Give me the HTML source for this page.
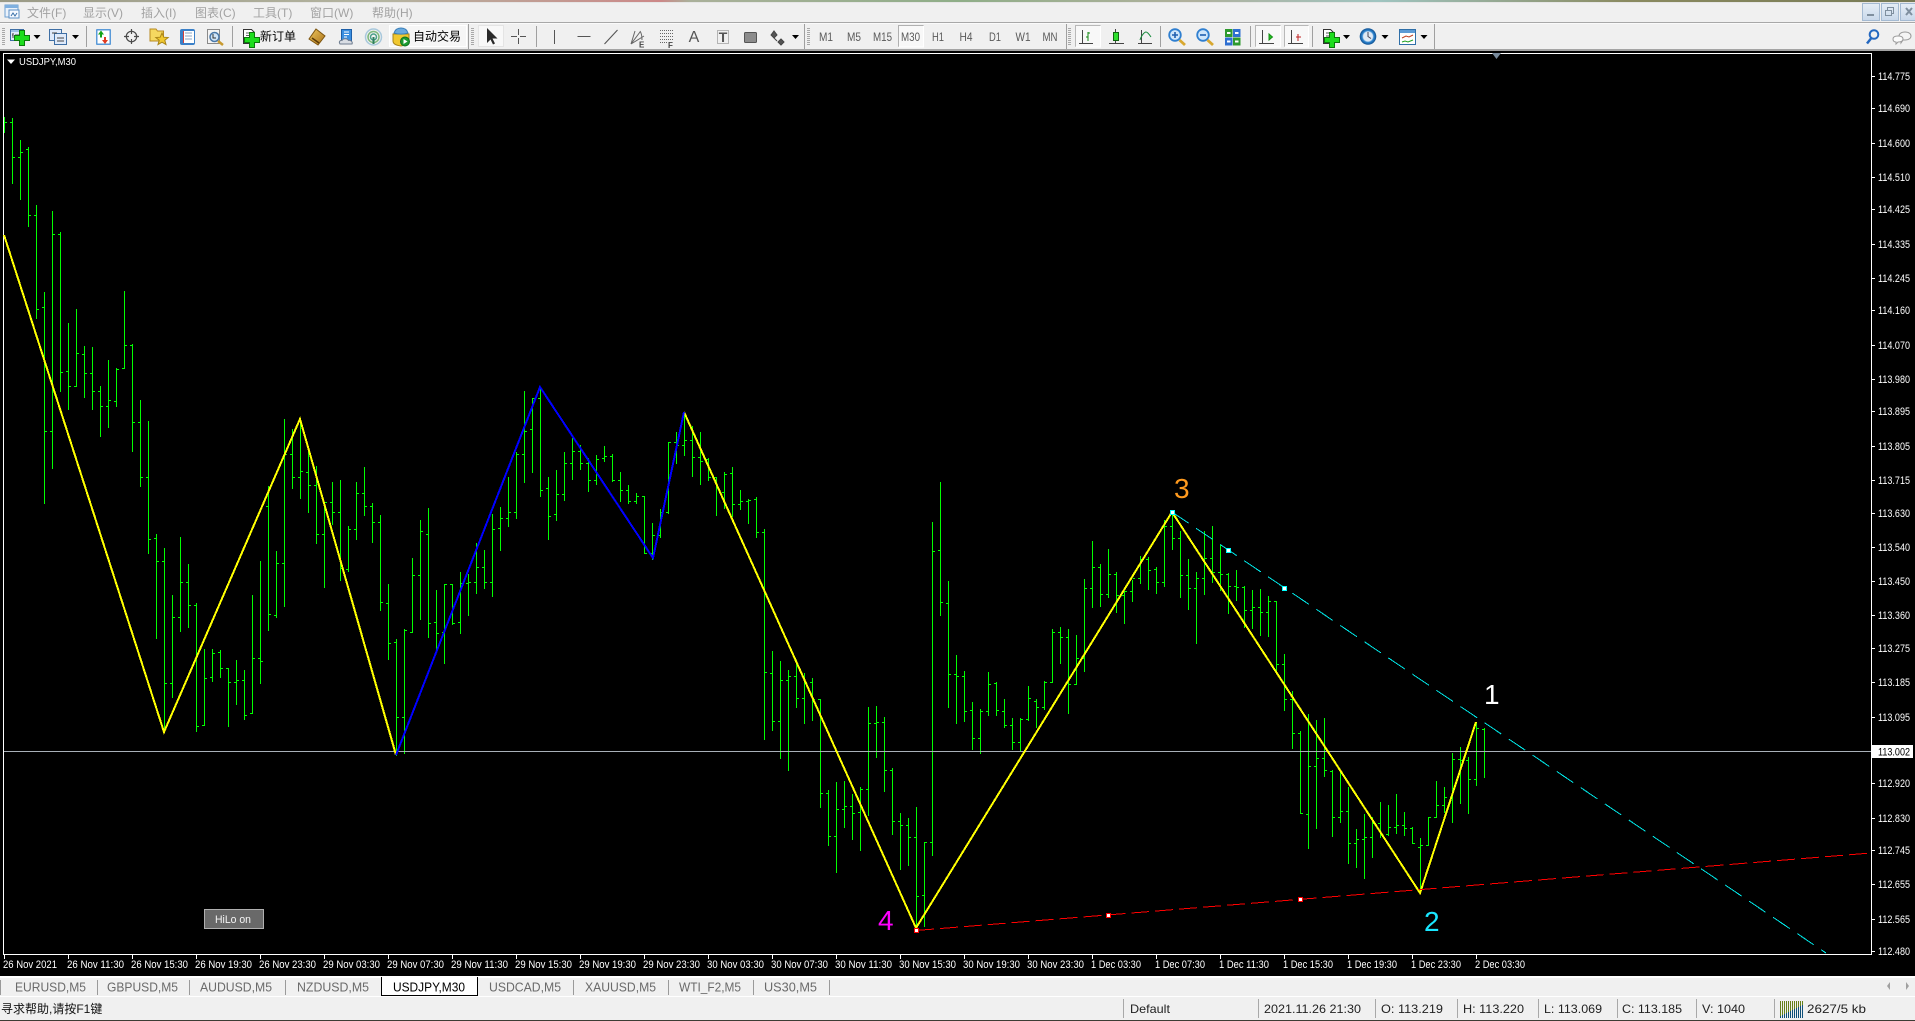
<!DOCTYPE html>
<html><head><meta charset="utf-8"><title>USDJPY,M30</title>
<style>
html,body{margin:0;padding:0;background:#000;width:1915px;height:1021px;overflow:hidden}
svg{display:block;position:absolute;left:0;top:0}
text{font-family:"Liberation Sans","Noto Sans CJK SC",sans-serif}
.m{font-size:12px;fill:#a2a2a2}
.tb{font-size:12px;fill:#000}
.tf{font-size:12px;fill:#5a5a5a;text-anchor:middle}
.ax{font-size:11px;fill:#fff}
.tm{font-size:11px;fill:#fff}
.tab{font-size:13px;fill:#6a6a6a}
.st{font-size:12px;fill:#222}
.num{font-size:28px}
</style></head><body>
<svg width="1915" height="1021" viewBox="0 0 1915 1021" xmlns="http://www.w3.org/2000/svg">
<defs>
<linearGradient id="wall" x1="0" x2="1" y1="0" y2="0">
<stop offset="0" stop-color="#9a9a86"/><stop offset=".2" stop-color="#b4b4a0"/><stop offset=".345" stop-color="#c88"/><stop offset=".36" stop-color="#aab09a"/><stop offset=".5" stop-color="#8fae88"/><stop offset=".62" stop-color="#b0b09c"/><stop offset=".72" stop-color="#9fc4c0"/><stop offset=".85" stop-color="#8a8a60"/><stop offset="1" stop-color="#777a55"/>
</linearGradient>
<linearGradient id="wb" x1="0" x2="0" y1="0" y2="1"><stop offset="0" stop-color="#e6eef7"/><stop offset="1" stop-color="#c8d8ea"/></linearGradient>
<linearGradient id="gold" x1="0" x2="1" y1="0" y2="1"><stop offset="0" stop-color="#f0c860"/><stop offset="1" stop-color="#a87018"/></linearGradient>
<radialGradient id="clk"><stop offset=".55" stop-color="#dfeaf5"/><stop offset=".7" stop-color="#2f86d0"/><stop offset="1" stop-color="#0e4f90"/></radialGradient>
<path id="plus" d="M-2.5-7.5h5v5h5v5h-5v5h-5v-5h-5v-5h5z" fill="#1edc1e" stroke="#0a7a0a"/>
<path id="dd" d="M-3.5-2h7l-3.5 4z" fill="#000"/>
<pattern id="grip" width="4" height="2" patternUnits="userSpaceOnUse"><rect width="4" height="1" fill="#a8a8a8"/></pattern>
</defs>

<rect width="1915" height="1021" fill="#f0f0f0"/>
<rect width="1915" height="2" fill="url(#wall)"/>
<rect y="2" width="1915" height="1" fill="#e6e6e6"/>

<!-- menu -->
<g>
<rect x="5" y="5" width="13" height="12" fill="#eaf2fb" stroke="#6d9fd0"/><rect x="5" y="5" width="13" height="3" fill="#7fb0e0"/>
<rect x="9" y="10" width="10" height="8" fill="#f5f9ff" stroke="#5b8fc4"/><path d="M11 16l2-3 2 3 2-3" fill="none" stroke="#3a70a8"/>
<text class="m" x="27" y="17">文件(F)</text>
<text class="m" x="83" y="17">显示(V)</text>
<text class="m" x="141" y="17">插入(I)</text>
<text class="m" x="195" y="17">图表(C)</text>
<text class="m" x="253" y="17">工具(T)</text>
<text class="m" x="310" y="17">窗口(W)</text>
<text class="m" x="372" y="17">帮助(H)</text>
</g>
<!-- window buttons -->
<g>
<rect x="1862.5" y="3.5" width="17" height="17" fill="url(#wb)" stroke="#a4bad2"/><rect x="1867" y="14" width="7" height="2" fill="#7f8f9f"/>
<rect x="1881.5" y="3.5" width="17" height="17" fill="url(#wb)" stroke="#a4bad2"/><path d="M1887.5 10.5v-3h6v6h-2M1885.5 10.5h6v5h-6z" fill="none" stroke="#7f8f9f"/>
<rect x="1900.5" y="3.5" width="17" height="17" fill="url(#wb)" stroke="#a4bad2"/><path d="M1906 8l6 7M1912 8l-6 7" stroke="#7f8f9f" stroke-width="2"/>
</g>
<rect y="22" width="1915" height="1" fill="#a8a8a8"/>
<rect y="23" width="1915" height="1" fill="#fafafa"/>

<!-- toolbar separators & grips -->
<g fill="#a0a0a0">
<rect x="86" y="26" width="1" height="21"/><rect x="232" y="26" width="1" height="21"/><rect x="468" y="24" width="1" height="25"/><rect x="536" y="26" width="1" height="21"/><rect x="804" y="24" width="1" height="25"/><rect x="1066" y="24" width="1" height="25"/><rect x="1160" y="26" width="1" height="21"/><rect x="1250" y="26" width="1" height="21"/><rect x="1312" y="26" width="1" height="21"/><rect x="1434" y="24" width="1" height="25"/>
</g>
<rect x="2" y="27" width="3" height="19" fill="url(#grip)"/>
<rect x="471" y="27" width="3" height="19" fill="url(#grip)"/>
<rect x="807" y="27" width="3" height="19" fill="url(#grip)"/>
<rect x="1068" y="27" width="3" height="19" fill="url(#grip)"/>

<!-- pressed buttons -->
<g fill="#f8f8f8">
<path d="M389.5 25.5h77v21h-77z" stroke="#fff" fill="#f6f6f6"/>
<path d="M478.5 25.5h25v21h-25z" stroke="#e4e4e4"/>
<path d="M899 26h25v21h-25z"/><path d="M898.5 47v-21.5h25" fill="none" stroke="#b0b0b0"/><path d="M923.5 26v21h-25" fill="none" stroke="#fff"/>
<path d="M1076 26h24v21h-24z"/><path d="M1075.5 47v-21.5h25" fill="none" stroke="#b8b8b8"/><path d="M1100.5 26v21h-25" fill="none" stroke="#fff"/>
<path d="M1255 26h25v21h-25z"/><path d="M1255.5 47v-21.5h25" fill="none" stroke="#b8b8b8"/><path d="M1280.5 26v21h-25" fill="none" stroke="#fff"/>
<path d="M1284 26h24v21h-24z"/><path d="M1284.5 47v-21.5h24" fill="none" stroke="#b8b8b8"/><path d="M1308.5 26v21h-24" fill="none" stroke="#fff"/>
</g>

<!-- new chart -->
<g><rect x="10.5" y="29.5" width="13" height="11" fill="#dfeafa" stroke="#3f6fa5"/><rect x="11" y="30" width="12" height="2" fill="#9cbfe6"/><path d="M13 33v5M15 35h5M13 35h-1" stroke="#444"/><use href="#plus" x="22" y="38"/><use href="#dd" x="37" y="37"/></g>
<!-- profiles -->
<g fill="#dfeafa" stroke="#3f6fa5"><rect x="49.5" y="29.5" width="12" height="11"/><rect x="54.5" y="33.5" width="12" height="11"/><path d="M52 33h5M57 38h7M57 41h7" stroke="#444" fill="none"/><use href="#dd" x="75.5" y="37" stroke="none"/></g>
<!-- market watch -->
<g><rect x="96" y="29" width="15" height="16" rx="1" fill="#5a9ad8"/><rect x="97.500" y="30.500" width="12" height="13" fill="#fff"/><path d="M101 30.500l-3 4h2v3h2v-3h2z" fill="#16a316"/><path d="M105 44l3-4h-2v-3h-2v3h-2z" fill="#e03a20"/></g>
<!-- crosshair -->
<g fill="none" stroke="#4a4a4a" stroke-width="1.2"><circle cx="131.5" cy="36.5" r="5.2"/><path d="M131.5 29v5M131.5 39v5M124 36.5h5M134 36.5h5"/></g>
<!-- navigator -->
<g><path d="M150 29h6l1.5 2h6v10h-13.500z" fill="#f5d860" stroke="#b88a20"/><path d="M162 33l1.8 4.200 4.400.3-3.400 2.800 1.200 4.300-4-2.400-4 2.400 1.200-4.300-3.400-2.800 4.400-.3z" fill="#f0c830" stroke="#a88418"/></g>
<!-- terminal -->
<g><rect x="180" y="29" width="15" height="16" rx="2" fill="#3a80c8"/><rect x="183" y="31" width="11" height="12" fill="#fff"/><path d="M185 33h7M185 36h7M185 39h7" stroke="#8aa4c4"/><rect x="183" y="31" width="1" height="12" fill="#d04040"/></g>
<!-- tester -->
<g><rect x="207.5" y="29.5" width="12" height="14" fill="#f4f4f4" stroke="#8a8a8a"/><circle cx="214.5" cy="37" r="4.5" fill="#cfe4f7" stroke="#4a78a8" stroke-width="1.5"/><path d="M218 41l5 4" stroke="#c89a30" stroke-width="2.5"/><path d="M213 34v4h3" stroke="#333" fill="none"/></g>
<!-- new order -->
<g><path d="M243.5 29.5h8l3 3v11h-11z" fill="#fff" stroke="#333"/><path d="M246 33h5M246 35.500h6M246 38h4" stroke="#666"/><use href="#plus" x="252" y="40"/><text class="tb" x="260" y="40.500">新订单</text></g>
<!-- metaeditor -->
<g><path d="M316 29l9 7-7 9-9-6z" fill="url(#gold)" stroke="#7d5510"/><path d="M312 38l7 5" stroke="#5a3a08" stroke-width="1.5"/></g>
<!-- cloud doc -->
<g><path d="M341.5 29.5h10v11h-10z" fill="#3b8fe0" stroke="#1d5fa8"/><path d="M344 32h5M344 34.500h5M344 37h3" stroke="#fff"/><path d="M340 44c-1.500-2 0-4 2-3.500 1-2 5-2.500 6.500 0 2.500-.5 4.500 1.500 3.500 3.500z" fill="#d9dde4" stroke="#6f7d90"/></g>
<!-- signal -->
<g fill="none"><circle cx="373.5" cy="37" r="8" stroke="#a8c8dc" stroke-width="1.5"/><circle cx="373.5" cy="37" r="5.5" stroke="#7db87d" stroke-width="1.5"/><circle cx="373.5" cy="37" r="3" stroke="#4a9f8a" stroke-width="1.5"/><rect x="372.500" y="37" width="2" height="7" fill="#2f7f60"/></g>
<!-- autotrading -->
<g><path d="M393 34h16v7c0 3-4 4.500-8 5-4-.5-8-2-8-5z" fill="#f0c830" stroke="#a88418"/><path d="M394 33c1-3 3-5 7-5s6 2 7 5c-4 1.500-10 1.500-14 0z" fill="#6aaade" stroke="#3a7eb8"/><circle cx="405" cy="41.500" r="4.500" fill="#1c9c30" stroke="#0f6f1f"/><path d="M403.500 39v5l4-2.500z" fill="#fff"/><text class="tb" x="413" y="40.500">自动交易</text></g>
<!-- cursor -->
<path d="M487 28v15l3.500-3.500 2.500 5 2-1-2.500-5h5z" fill="#2a2a2a"/>
<path d="M518.5 29v6M518.5 38v6M511 36.5h6M520 36.5h6" stroke="#555" fill="none"/>
<path d="M554.5 30v14" stroke="#555"/>
<path d="M577.5 36.5h13" stroke="#555"/>
<path d="M604.5 44l13-14" stroke="#555" stroke-width="1.1"/>
<!-- fib fan -->
<path d="M631 44l4-13M631 44l9-12M631 44l13-8M640 31c2 3 2 6 2 9" fill="none" stroke="#666"/>
<text x="639" y="47.500" style="font-size:8px;font-weight:bold;fill:#444">E</text>
<path d="M660 30.500h13M660 33.500h13M660 36.500h13M660 39.500h13M660 42.500h8" stroke="#666" stroke-dasharray="1 1"/>
<text x="668" y="48" style="font-size:8px;font-weight:bold;fill:#444">F</text>
<text x="694" y="42" style="font-size:16px;fill:#555;text-anchor:middle">A</text>
<rect x="717.5" y="30.5" width="11" height="13" fill="none" stroke="#777" stroke-dasharray="1 1"/><text x="723" y="42" style="font-size:14px;font-weight:bold;fill:#555;text-anchor:middle">T</text>
<rect x="744.5" y="32.5" width="12" height="10" rx="1" fill="#8c8c8c" stroke="#555"/>
<path d="M771 35l3-4 3 4-3 3zM778 42l3-3 3 3-3 3zM774 38l3 3" fill="#555" stroke="#444"/>
<use href="#dd" x="795.5" y="37"/>

<!-- timeframes -->
<text class="tf" x="826" y="41" textLength="14" lengthAdjust="spacingAndGlyphs">M1</text>
<text class="tf" x="854" y="41" textLength="14" lengthAdjust="spacingAndGlyphs">M5</text>
<text class="tf" x="882.5" y="41" textLength="19" lengthAdjust="spacingAndGlyphs">M15</text>
<text class="tf" x="910.5" y="41" textLength="19" lengthAdjust="spacingAndGlyphs">M30</text>
<text class="tf" x="938" y="41" textLength="12" lengthAdjust="spacingAndGlyphs">H1</text>
<text class="tf" x="966" y="41" textLength="13" lengthAdjust="spacingAndGlyphs">H4</text>
<text class="tf" x="995" y="41" textLength="12" lengthAdjust="spacingAndGlyphs">D1</text>
<text class="tf" x="1023" y="41" textLength="15" lengthAdjust="spacingAndGlyphs">W1</text>
<text class="tf" x="1050" y="41" textLength="15" lengthAdjust="spacingAndGlyphs">MN</text>

<!-- chart types -->
<g fill="none" stroke="#444"><path d="M1082.5 30v14M1079 43.5h14"/><path d="M1088 32v9M1086 37h2M1088 33h2" stroke="#118811"/><path d="M1115.5 29v15M1109 43.5h15"/><rect x="1113.5" y="32.5" width="5" height="8" fill="#2ee02e" stroke="#116611"/><path d="M1141.5 30v14M1138 43.5h14"/><path d="M1140 40c2-6 5-8 6-8s3 2 5 5" stroke="#158a3a"/></g>
<!-- zoom -->
<g><circle cx="1175" cy="35" r="5.8" fill="#cfe6fb" stroke="#2f7fd0" stroke-width="1.8"/><path d="M1172 35h6M1175 32v6" stroke="#1f5fb0" stroke-width="1.6"/><path d="M1179.5 40l5.5 5" stroke="#d8a830" stroke-width="2.8"/><circle cx="1203" cy="35" r="5.8" fill="#cfe6fb" stroke="#2f7fd0" stroke-width="1.8"/><path d="M1200 35h6" stroke="#1f5fb0" stroke-width="1.6"/><path d="M1207.5 40l5.5 5" stroke="#d8a830" stroke-width="2.8"/></g>
<!-- tile -->
<g><rect x="1225" y="29" width="7.5" height="8" fill="#2e9a2e"/><rect x="1233" y="29" width="7.5" height="8" fill="#2f6fd0"/><rect x="1225" y="37.5" width="7.5" height="8" fill="#2f6fd0"/><rect x="1233" y="37.5" width="7.5" height="8" fill="#2e9a2e"/><path d="M1227 33h3.500M1235 33h3.500M1227 41.500h3.500M1235 41.500h3.500" stroke="#fff" stroke-width="2"/></g>
<!-- autoscroll / shift -->
<g fill="none" stroke="#444"><path d="M1262.5 30v14M1259 43.5h15"/><path d="M1269 34v6l3.500-3z" fill="#24c024" stroke="#149014"/><path d="M1291.5 30v14M1288 43.5h15"/><path d="M1298 34v7M1296 37h5" stroke="#c02020"/></g>
<!-- template -->
<g><path d="M1323.5 29.5h7l3 3v11h-10z" fill="#fff" stroke="#333"/><path d="M1326 33h4M1326 36h4" stroke="#555"/><use href="#plus" x="1332" y="40"/><use href="#dd" x="1346.5" y="37"/></g>
<!-- clock -->
<g><circle cx="1368" cy="36.5" r="8.3" fill="url(#clk)"/><path d="M1368 32v4.500l3 2" stroke="#445" fill="none"/><use href="#dd" x="1385" y="37"/></g>
<!-- window chart -->
<g><rect x="1399.5" y="29.5" width="16" height="15" fill="#fff" stroke="#2f6fa8"/><rect x="1400" y="30" width="15" height="3" fill="#5d9bd5"/><path d="M1402 38l4-2 3 1 4-2" fill="none" stroke="#c04020"/><path d="M1402 42l3-1 3 1 5-2" fill="none" stroke="#20a020"/><use href="#dd" x="1424" y="37"/></g>
<!-- search / chat -->
<g fill="none"><circle cx="1874" cy="34.5" r="4.300" stroke="#2468c0" stroke-width="2"/><path d="M1871 38.500l-4 5" stroke="#2468c0" stroke-width="2.5"/><path d="M1899 36c0-2 2-4 6-4s6 2 6 4-2 4-6 4h-2l-2 3v-3c-1-.5-2-2-2-4z" fill="#f4f4f4" stroke="#9a9a9a"/><path d="M1893 39c0-2 2-3 5-3s5 1 5 3-2 3-5 3l-2 2v-2c-2 0-3-1-3-3z" fill="#fbfbfb" stroke="#9a9a9a"/></g>

<rect y="49" width="1915" height="2" fill="#a4a4a4"/>

<!-- chart area -->
<rect y="51" width="1915" height="925" fill="#000"/>
<g shape-rendering="crispEdges">
<g fill="#fff"><rect x="3" y="53" width="1869" height="1"/><rect x="3" y="53" width="1" height="902"/><rect x="1871" y="53" width="1" height="902"/><rect x="3" y="954" width="1869" height="1"/></g>
<g fill="none" stroke="#00ff00" stroke-width="1">
<path transform="translate(.5 0)" d="M4 117V133M12 118V184M20 140V200M28 147V227M36 205V319M44 292V504M52 211V469M60 232V392M68 323V410M76 309V387M84 346V398M92 347V410M100 386V437M108 360V428M116 368V407M124 291V369M132 344V452M140 400V487M148 421V554M156 534V639M164 548V732M172 595V698M180 537V632M188 564V628M196 603V732M204 649V726M212 649V682M220 650V678M228 668V727M236 660V705M244 670V720M252 595V714M260 561V684M268 486V631M276 551V618M284 419V607M292 429V489M300 420V499M308 450V513M316 466V544M324 506V588M332 482V525M340 480V581M348 526V572M356 482V540M364 467V516M372 503V543M380 515V611M388 584V660M396 639V756M404 629V754M412 558V633M420 520V620M428 508V638M436 590V651M444 584V664M452 584V625M460 572V634M468 574V616M476 543V594M484 550V589M492 514V597M500 507V551M508 477V527M516 452V519M524 391V483M532 398V473M540 388V497M548 477V540M556 470V521M564 452V501M572 438V480M580 445V470M588 458V492M596 455V485M604 446V462M612 454V482M620 472V502M628 485V504M636 493V504M644 496V554M652 523V560M660 509V538M668 442V514M676 432V464M684 413V456M692 426V477M700 432V485M708 458V481M716 477V516M724 472V509M732 467V517M740 490V510M748 499V524M756 497V538M764 529V740M772 651V731M780 661V759M788 670V771M796 660V708M804 673V724M812 678V721M820 699V808M828 790V846M836 782V873M844 781V828M852 794V840M860 787V851M868 707V816M876 706V758M884 717V792M892 768V835M900 813V870M908 818V866M916 807V929M924 842V927M932 522V856M940 482V616M948 581V708M956 655V724M964 671V722M972 702V750M980 709V754M988 672V716M996 682V716M1004 699V728M1012 718V750M1020 718V752M1028 686V721M1036 699V728M1044 681V710M1052 629V683M1060 627V664M1068 629V714M1076 635V685M1084 579V672M1092 541V608M1100 564V607M1108 549V598M1116 572V613M1124 591V624M1132 580V602M1140 556V584M1148 557V590M1156 567V594M1164 520V587M1172 513V550M1180 531V598M1188 559V610M1196 572V644M1204 531V595M1212 526V583M1220 545V591M1228 573V614M1236 570V601M1244 586V628M1252 590V629M1260 589V636M1268 596V637M1276 601V674M1284 654V711M1292 691V749M1300 731V814M1308 714V849M1316 720V829M1324 718V777M1332 770V837M1340 772V823M1348 787V864M1356 829V868M1364 814V879M1372 817V858M1380 802V838M1388 805V836M1396 794V834M1404 812V836M1412 827V844M1420 838V893M1428 817V846M1436 781V818M1444 787V813M1452 753V823M1460 747V804M1468 757V814M1476 722V786M1484 728V778"/>
<path transform="translate(0 .5)" d="M5 122h2M10 122h2M13 157h2M18 157h2M21 152h2M26 149h2M29 215h2M34 215h2M37 309h2M42 307h2M45 431h2M50 431h2M53 234h2M58 234h2M61 372h2M66 371h2M69 386h2M74 386h2M77 353h2M82 354h2M85 373h2M90 373h2M93 391h2M98 391h2M101 406h2M106 406h2M109 400h2M114 401h2M117 369h2M122 368h2M125 345h2M130 345h2M133 422h2M138 422h2M141 477h2M146 477h2M149 539h2M154 538h2M157 561h2M162 561h2M165 683h2M170 683h2M173 617h2M178 617h2M181 582h2M186 582h2M189 605h2M194 605h2M197 726h2M202 725h2M205 678h2M210 677h2M213 653h2M218 652h2M221 668h2M226 668h2M229 682h2M234 682h2M237 680h2M242 680h2M245 715h2M250 713h2M253 658h2M258 658h2M261 661h2M266 506h2M269 614h2M274 615h2M277 563h2M282 563h2M285 454h2M290 454h2M293 477h2M298 477h2M301 471h2M306 472h2M309 485h2M314 485h2M317 534h2M322 534h2M325 502h2M330 502h2M333 512h2M338 512h2M341 568h2M346 569h2M349 529h2M354 529h2M357 493h2M362 493h2M365 506h2M370 506h2M373 522h2M378 522h2M381 602h2M386 603h2M389 643h2M394 642h2M397 717h2M402 717h2M405 630h2M410 632h2M413 575h2M418 575h2M421 531h2M426 534h2M429 623h2M434 622h2M437 633h2M442 632h2M445 584h2M450 584h2M453 623h2M458 622h2M461 583h2M466 583h2M469 582h2M474 582h2M477 567h2M482 567h2M485 582h2M490 582h2M493 529h2M498 528h2M501 518h2M506 518h2M509 512h2M514 512h2M517 454h2M522 454h2M525 431h2M530 429h2M533 398h2M538 398h2M541 490h2M546 488h2M549 516h2M554 514h2M557 494h2M562 494h2M565 463h2M570 463h2M573 451h2M578 451h2M581 463h2M586 463h2M589 480h2M594 480h2M597 459h2M602 458h2M605 456h2M610 456h2M613 480h2M618 480h2M621 490h2M626 490h2M629 501h2M634 501h2M637 496h2M642 496h2M645 553h2M650 553h2M653 535h2M658 535h2M661 512h2M666 512h2M669 442h2M674 442h2M677 445h2M682 445h2M685 440h2M690 440h2M693 457h2M698 457h2M701 461h2M706 459h2M709 477h2M714 477h2M717 487h2M722 492h2M725 474h2M730 473h2M733 504h2M738 504h2M741 501h2M746 501h2M749 500h2M754 499h2M757 532h2M762 532h2M765 672h2M770 673h2M773 721h2M778 721h2M781 680h2M786 680h2M789 676h2M794 676h2M797 698h2M802 698h2M805 682h2M810 682h2M813 699h2M818 699h2M821 793h2M826 793h2M829 836h2M834 836h2M837 809h2M842 809h2M845 806h2M850 806h2M853 813h2M858 812h2M861 789h2M866 789h2M869 723h2M874 723h2M877 722h2M882 722h2M885 770h2M890 770h2M893 821h2M898 821h2M901 825h2M906 825h2M909 837h2M914 837h2M917 896h2M922 895h2M925 842h2M930 842h2M933 551h2M938 550h2M941 602h2M946 603h2M949 674h2M954 674h2M957 676h2M962 676h2M965 711h2M970 710h2M973 738h2M978 738h2M981 711h2M986 711h2M989 684h2M994 683h2M997 710h2M1002 711h2M1005 725h2M1010 725h2M1013 742h2M1018 742h2M1021 719h2M1026 719h2M1029 698h2M1034 701h2M1037 707h2M1042 707h2M1045 682h2M1050 682h2M1053 632h2M1058 632h2M1061 637h2M1066 637h2M1069 684h2M1074 684h2M1077 658h2M1082 658h2M1085 588h2M1090 588h2M1093 567h2M1098 567h2M1101 594h2M1106 594h2M1109 574h2M1114 574h2M1117 595h2M1122 595h2M1125 591h2M1130 591h2M1133 578h2M1138 578h2M1141 559h2M1146 559h2M1149 570h2M1154 569h2M1157 582h2M1162 582h2M1165 526h2M1170 526h2M1173 538h2M1178 538h2M1181 575h2M1186 575h2M1189 588h2M1194 588h2M1197 578h2M1202 578h2M1205 558h2M1210 558h2M1213 572h2M1218 572h2M1221 574h2M1226 574h2M1229 586h2M1234 586h2M1237 587h2M1242 587h2M1245 610h2M1250 610h2M1253 607h2M1258 607h2M1261 612h2M1266 612h2M1269 601h2M1274 601h2M1277 664h2M1282 664h2M1285 699h2M1290 699h2M1293 733h2M1298 733h2M1301 813h2M1306 814h2M1309 766h2M1314 766h2M1317 758h2M1322 758h2M1325 770h2M1330 771h2M1333 817h2M1338 817h2M1341 811h2M1346 811h2M1349 843h2M1354 843h2M1357 839h2M1362 839h2M1365 837h2M1370 837h2M1373 823h2M1378 823h2M1381 834h2M1386 834h2M1389 827h2M1394 827h2M1397 825h2M1402 825h2M1405 828h2M1410 828h2M1413 843h2M1418 847h2M1421 845h2M1426 845h2M1429 817h2M1434 817h2M1437 805h2M1442 805h2M1445 797h2M1450 797h2M1453 759h2M1458 759h2M1461 760h2M1466 760h2M1469 779h2M1474 779h2M1477 728h2M1482 729h2"/>
</g>
<rect x="4" y="751" width="1867" height="1" fill="#a8b0b8"/>
</g>
<!-- zigzags -->
<g fill="none" stroke-width="2" shape-rendering="crispEdges">
<path d="M4 235L164 732 300 419 396 755" stroke="#ffff00"/>
<path d="M684 412L916 928 1172 512 1420 893 1476 722" stroke="#ffff00"/>
<path d="M396 755L540 387 653 558 684 412" stroke="#0000ff"/>
</g>
<path d="M916 930.5L1871 853" fill="none" stroke="#ff0000" stroke-dasharray="18 6" shape-rendering="crispEdges"/>
<path d="M1172 512L1826 953" fill="none" stroke="#00e6e6" stroke-dasharray="20 9" shape-rendering="crispEdges"/>
<g shape-rendering="crispEdges" fill="#fff">
<g stroke="#ff0000"><rect x="914.5" y="928.5" width="4" height="4"/><rect x="1106.5" y="913.5" width="4" height="4"/><rect x="1298.5" y="897.5" width="4" height="4"/></g>
<g stroke="#00ffff"><rect x="1170.5" y="510.5" width="4" height="4"/><rect x="1226.5" y="548.5" width="4" height="4"/><rect x="1282.5" y="586.5" width="4" height="4"/></g>
</g>
<text class="num" x="1174" y="498" style="fill:#ff9a1e">3</text>
<text class="num" x="1484" y="704" style="fill:#fff">1</text>
<text class="num" x="1424" y="931" style="fill:#19e6ff">2</text>
<text class="num" x="878" y="930" style="fill:#ff00ff">4</text>

<!-- chart label -->
<path d="M7 59.5h8l-4 4.500z" fill="#fff"/>
<text x="19" y="65" style="font-size:10px;fill:#fff" textLength="57" lengthAdjust="spacingAndGlyphs">USDJPY,M30</text>
<path d="M1492 53h9l-4.500 6z" fill="#788a9c"/>

<!-- button -->
<rect x="204.5" y="909.5" width="59" height="19" fill="#696969" stroke="#b0b0b0"/>
<text x="215" y="923" style="font-size:11px;fill:#f4f4f4" textLength="36" lengthAdjust="spacingAndGlyphs">HiLo on</text>

<!-- price axis -->
<g fill="#fff" shape-rendering="crispEdges"><path d="M1872 76h3v1h-3zM1872 108h3v1h-3zM1872 143h3v1h-3zM1872 177h3v1h-3zM1872 209h3v1h-3zM1872 244h3v1h-3zM1872 278h3v1h-3zM1872 310h3v1h-3zM1872 345h3v1h-3zM1872 379h3v1h-3zM1872 411h3v1h-3zM1872 446h3v1h-3zM1872 480h3v1h-3zM1872 513h3v1h-3zM1872 547h3v1h-3zM1872 581h3v1h-3zM1872 615h3v1h-3zM1872 648h3v1h-3zM1872 682h3v1h-3zM1872 717h3v1h-3zM1872 783h3v1h-3zM1872 818h3v1h-3zM1872 850h3v1h-3zM1872 884h3v1h-3zM1872 919h3v1h-3zM1872 951h3v1h-3z"/></g>
<g>
<text class="ax" x="1878" y="80" textLength="32" lengthAdjust="spacingAndGlyphs">114.775</text>
<text class="ax" x="1878" y="112" textLength="32" lengthAdjust="spacingAndGlyphs">114.690</text>
<text class="ax" x="1878" y="147" textLength="32" lengthAdjust="spacingAndGlyphs">114.600</text>
<text class="ax" x="1878" y="181" textLength="32" lengthAdjust="spacingAndGlyphs">114.510</text>
<text class="ax" x="1878" y="213" textLength="32" lengthAdjust="spacingAndGlyphs">114.425</text>
<text class="ax" x="1878" y="248" textLength="32" lengthAdjust="spacingAndGlyphs">114.335</text>
<text class="ax" x="1878" y="282" textLength="32" lengthAdjust="spacingAndGlyphs">114.245</text>
<text class="ax" x="1878" y="314" textLength="32" lengthAdjust="spacingAndGlyphs">114.160</text>
<text class="ax" x="1878" y="349" textLength="32" lengthAdjust="spacingAndGlyphs">114.070</text>
<text class="ax" x="1878" y="383" textLength="32" lengthAdjust="spacingAndGlyphs">113.980</text>
<text class="ax" x="1878" y="415" textLength="32" lengthAdjust="spacingAndGlyphs">113.895</text>
<text class="ax" x="1878" y="450" textLength="32" lengthAdjust="spacingAndGlyphs">113.805</text>
<text class="ax" x="1878" y="484" textLength="32" lengthAdjust="spacingAndGlyphs">113.715</text>
<text class="ax" x="1878" y="517" textLength="32" lengthAdjust="spacingAndGlyphs">113.630</text>
<text class="ax" x="1878" y="551" textLength="32" lengthAdjust="spacingAndGlyphs">113.540</text>
<text class="ax" x="1878" y="585" textLength="32" lengthAdjust="spacingAndGlyphs">113.450</text>
<text class="ax" x="1878" y="619" textLength="32" lengthAdjust="spacingAndGlyphs">113.360</text>
<text class="ax" x="1878" y="652" textLength="32" lengthAdjust="spacingAndGlyphs">113.275</text>
<text class="ax" x="1878" y="686" textLength="32" lengthAdjust="spacingAndGlyphs">113.185</text>
<text class="ax" x="1878" y="721" textLength="32" lengthAdjust="spacingAndGlyphs">113.095</text>
<text class="ax" x="1878" y="787" textLength="32" lengthAdjust="spacingAndGlyphs">112.920</text>
<text class="ax" x="1878" y="822" textLength="32" lengthAdjust="spacingAndGlyphs">112.830</text>
<text class="ax" x="1878" y="854" textLength="32" lengthAdjust="spacingAndGlyphs">112.745</text>
<text class="ax" x="1878" y="888" textLength="32" lengthAdjust="spacingAndGlyphs">112.655</text>
<text class="ax" x="1878" y="923" textLength="32" lengthAdjust="spacingAndGlyphs">112.565</text>
<text class="ax" x="1878" y="955" textLength="32" lengthAdjust="spacingAndGlyphs">112.480</text>
</g>
<rect x="1872" y="745" width="41" height="13" fill="#fff"/>
<text x="1878" y="755.500" style="font-size:11px;fill:#000" textLength="32" lengthAdjust="spacingAndGlyphs">113.002</text>

<!-- time axis -->
<path fill="#fff" shape-rendering="crispEdges" d="M4 955h1v4h-1zM68 955h1v4h-1zM132 955h1v4h-1zM196 955h1v4h-1zM260 955h1v4h-1zM324 955h1v4h-1zM388 955h1v4h-1zM452 955h1v4h-1zM516 955h1v4h-1zM580 955h1v4h-1zM644 955h1v4h-1zM708 955h1v4h-1zM772 955h1v4h-1zM836 955h1v4h-1zM900 955h1v4h-1zM964 955h1v4h-1zM1028 955h1v4h-1zM1092 955h1v4h-1zM1156 955h1v4h-1zM1220 955h1v4h-1zM1284 955h1v4h-1zM1348 955h1v4h-1zM1412 955h1v4h-1zM1476 955h1v4h-1z"/>
<g>
<text class="tm" x="3" y="968" textLength="54" lengthAdjust="spacingAndGlyphs">26 Nov 2021</text>
<text class="tm" x="67" y="968" textLength="57" lengthAdjust="spacingAndGlyphs">26 Nov 11:30</text>
<text class="tm" x="131" y="968" textLength="57" lengthAdjust="spacingAndGlyphs">26 Nov 15:30</text>
<text class="tm" x="195" y="968" textLength="57" lengthAdjust="spacingAndGlyphs">26 Nov 19:30</text>
<text class="tm" x="259" y="968" textLength="57" lengthAdjust="spacingAndGlyphs">26 Nov 23:30</text>
<text class="tm" x="323" y="968" textLength="57" lengthAdjust="spacingAndGlyphs">29 Nov 03:30</text>
<text class="tm" x="387" y="968" textLength="57" lengthAdjust="spacingAndGlyphs">29 Nov 07:30</text>
<text class="tm" x="451" y="968" textLength="57" lengthAdjust="spacingAndGlyphs">29 Nov 11:30</text>
<text class="tm" x="515" y="968" textLength="57" lengthAdjust="spacingAndGlyphs">29 Nov 15:30</text>
<text class="tm" x="579" y="968" textLength="57" lengthAdjust="spacingAndGlyphs">29 Nov 19:30</text>
<text class="tm" x="643" y="968" textLength="57" lengthAdjust="spacingAndGlyphs">29 Nov 23:30</text>
<text class="tm" x="707" y="968" textLength="57" lengthAdjust="spacingAndGlyphs">30 Nov 03:30</text>
<text class="tm" x="771" y="968" textLength="57" lengthAdjust="spacingAndGlyphs">30 Nov 07:30</text>
<text class="tm" x="835" y="968" textLength="57" lengthAdjust="spacingAndGlyphs">30 Nov 11:30</text>
<text class="tm" x="899" y="968" textLength="57" lengthAdjust="spacingAndGlyphs">30 Nov 15:30</text>
<text class="tm" x="963" y="968" textLength="57" lengthAdjust="spacingAndGlyphs">30 Nov 19:30</text>
<text class="tm" x="1027" y="968" textLength="57" lengthAdjust="spacingAndGlyphs">30 Nov 23:30</text>
<text class="tm" x="1091" y="968" textLength="50" lengthAdjust="spacingAndGlyphs">1 Dec 03:30</text>
<text class="tm" x="1155" y="968" textLength="50" lengthAdjust="spacingAndGlyphs">1 Dec 07:30</text>
<text class="tm" x="1219" y="968" textLength="50" lengthAdjust="spacingAndGlyphs">1 Dec 11:30</text>
<text class="tm" x="1283" y="968" textLength="50" lengthAdjust="spacingAndGlyphs">1 Dec 15:30</text>
<text class="tm" x="1347" y="968" textLength="50" lengthAdjust="spacingAndGlyphs">1 Dec 19:30</text>
<text class="tm" x="1411" y="968" textLength="50" lengthAdjust="spacingAndGlyphs">1 Dec 23:30</text>
<text class="tm" x="1475" y="968" textLength="50" lengthAdjust="spacingAndGlyphs">2 Dec 03:30</text>
</g>

<!-- tab strip -->
<rect y="976" width="1915" height="2" fill="#fff"/>
<rect y="978" width="1915" height="19" fill="#f0f0f0"/>
<rect y="996" width="1915" height="1" fill="#fff"/>
<g fill="#9a9a9a" shape-rendering="crispEdges"><rect x="0" y="980" width="1" height="15"/><rect x="97" y="980" width="1" height="15"/><rect x="189" y="980" width="1" height="15"/><rect x="285" y="980" width="1" height="15"/><rect x="573" y="980" width="1" height="15"/><rect x="668" y="980" width="1" height="15"/><rect x="753" y="980" width="1" height="15"/><rect x="829" y="980" width="1" height="15"/></g>
<rect x="381.5" y="977" width="96" height="19" fill="#fff"/>
<path d="M381.5 977v18.500h96v-18.500" fill="none" stroke="#000" shape-rendering="crispEdges"/>
<text class="tab" x="15" y="991.500" textLength="71" lengthAdjust="spacingAndGlyphs">EURUSD,M5</text>
<text class="tab" x="107" y="991.500" textLength="71" lengthAdjust="spacingAndGlyphs">GBPUSD,M5</text>
<text class="tab" x="200" y="991.500" textLength="72" lengthAdjust="spacingAndGlyphs">AUDUSD,M5</text>
<text class="tab" x="297" y="991.500" textLength="72" lengthAdjust="spacingAndGlyphs">NZDUSD,M5</text>
<text class="tab" x="393" y="991.500" style="fill:#000" textLength="72" lengthAdjust="spacingAndGlyphs">USDJPY,M30</text>
<text class="tab" x="489" y="991.500" textLength="72" lengthAdjust="spacingAndGlyphs">USDCAD,M5</text>
<text class="tab" x="585" y="991.500" textLength="71" lengthAdjust="spacingAndGlyphs">XAUUSD,M5</text>
<text class="tab" x="679" y="991.500" textLength="62" lengthAdjust="spacingAndGlyphs">WTI_F2,M5</text>
<text class="tab" x="764" y="991.500" textLength="53" lengthAdjust="spacingAndGlyphs">US30,M5</text>
<path d="M1890 982v8l-3-4zM1906 982v8l3-4z" fill="#a0a0a0"/>

<!-- status bar -->
<rect y="997" width="1915" height="23" fill="#f0f0f0"/>
<rect y="1020" width="1915" height="1" fill="#3c3c34"/>
<g fill="#a8a8a8" shape-rendering="crispEdges"><rect x="1123" y="999" width="1" height="19"/><rect x="1258" y="999" width="1" height="19"/><rect x="1375" y="999" width="1" height="19"/><rect x="1457" y="999" width="1" height="19"/><rect x="1538" y="999" width="1" height="19"/><rect x="1617" y="999" width="1" height="19"/><rect x="1696" y="999" width="1" height="19"/><rect x="1774" y="999" width="1" height="19"/></g>
<text x="1" y="1013" style="font-size:12px;fill:#111">寻求帮助,请按F1键</text>
<text class="st" x="1130" y="1013" textLength="40" lengthAdjust="spacingAndGlyphs">Default</text>
<text class="st" x="1264" y="1013" textLength="97" lengthAdjust="spacingAndGlyphs">2021.11.26 21:30</text>
<text class="st" x="1381" y="1013" textLength="62" lengthAdjust="spacingAndGlyphs">O: 113.219</text>
<text class="st" x="1463" y="1013" textLength="61" lengthAdjust="spacingAndGlyphs">H: 113.220</text>
<text class="st" x="1544" y="1013" textLength="58" lengthAdjust="spacingAndGlyphs">L: 113.069</text>
<text class="st" x="1622" y="1013" textLength="60" lengthAdjust="spacingAndGlyphs">C: 113.185</text>
<text class="st" x="1702" y="1013" textLength="43" lengthAdjust="spacingAndGlyphs">V: 1040</text>
<g shape-rendering="crispEdges" fill="none">
<path d="M1780.5 1001V1016M1782.5 1001V1015M1784.5 1001V1014M1786.5 1001V1013M1788.5 1001V1012M1790.5 1001V1011M1792.5 1001V1010M1794.5 1001V1009M1796.5 1001V1008M1798.5 1001V1007M1800.5 1001V1006M1802.5 1001V1005" stroke="#66801a"/>
<path d="M1780.5 1016V1018M1782.5 1015V1018M1784.5 1014V1018M1786.5 1013V1018M1788.5 1012V1018M1790.5 1011V1018M1792.5 1010V1018M1794.5 1009V1018M1796.5 1008V1018M1798.5 1007V1018M1800.5 1006V1018M1802.5 1005V1018" stroke="#0f4f78"/>
</g>
<text class="st" x="1807" y="1013" textLength="59" lengthAdjust="spacingAndGlyphs">2627/5 kb</text>
</svg>
</body></html>
